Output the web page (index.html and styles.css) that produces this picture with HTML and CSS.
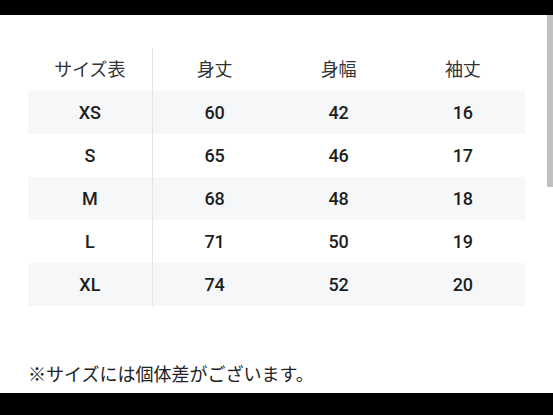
FILE: index.html
```html
<!DOCTYPE html>
<html lang="ja">
<head>
<meta charset="utf-8">
<link rel="stylesheet" href="styles.css">
</head>
<body>
<div class="frame">
  <div class="bar-top"></div>
  <main class="content">
    <table class="size-table">
      <thead>
        <tr><th class="first">サイズ表</th><th>身丈</th><th>身幅</th><th>袖丈</th></tr>
      </thead>
      <tbody>
        <tr class="band"><td class="first">XS</td><td>60</td><td>42</td><td>16</td></tr>
        <tr><td class="first">S</td><td>65</td><td>46</td><td>17</td></tr>
        <tr class="band"><td class="first">M</td><td>68</td><td>48</td><td>18</td></tr>
        <tr><td class="first">L</td><td>71</td><td>50</td><td>19</td></tr>
        <tr class="band"><td class="first">XL</td><td>74</td><td>52</td><td>20</td></tr>
      </tbody>
    </table>
    <p class="note">※サイズには個体差がございます。</p>
    <div class="scrollbar"><div class="thumb"></div></div>
  </main>
  <div class="bar-bottom"></div>
</div>
</body>
</html>
```

FILE: styles.css
```css
html, body {
  margin: 0;
  padding: 0;
  background: #000;
}
.frame {
  width: 553px;
  height: 415px;
  display: flex;
  flex-direction: column;
  overflow: hidden;
}
.bar-top {
  height: 15px;
  background: #000;
  flex: none;
}
.bar-bottom {
  height: 22px;
  background: #000;
  flex: none;
}
.content {
  position: relative;
  flex: 1;
  background: #fff;
  padding: 33px 0 0 28px;
  box-sizing: border-box;
  font-family: Roboto, "Noto Sans CJK JP", sans-serif;
}
.size-table {
  width: 497px;
  border-collapse: collapse;
  table-layout: fixed;
}
.size-table th,
.size-table td {
  height: 43px;
  padding: 0;
  text-align: center;
  vertical-align: middle;
  font-size: 18px;
}
.size-table th {
  font-family: "Noto Sans CJK JP", sans-serif;
  font-weight: 400;
  color: #333;
  font-size: 18px;
  line-height: 24px;
  padding-bottom: 4px;
  box-sizing: border-box;
}
.size-table td {
  font-weight: 500;
  color: #1e1e1e;
}
.size-table .first {
  border-right: 1px solid #e4e4e4;
}
.band td {
  background: #f6f7f9;
}
.note {
  margin: 55px 0 0 0;
  font-family: "Noto Sans CJK JP", sans-serif;
  font-size: 18px;
  line-height: 24px;
  color: #222;
}
.scrollbar {
  position: absolute;
  top: 0;
  right: 0;
  width: 6px;
  height: 100%;
  background: #fff;
}
.thumb {
  height: 172px;
  background: #c1c1c1;
}
```
